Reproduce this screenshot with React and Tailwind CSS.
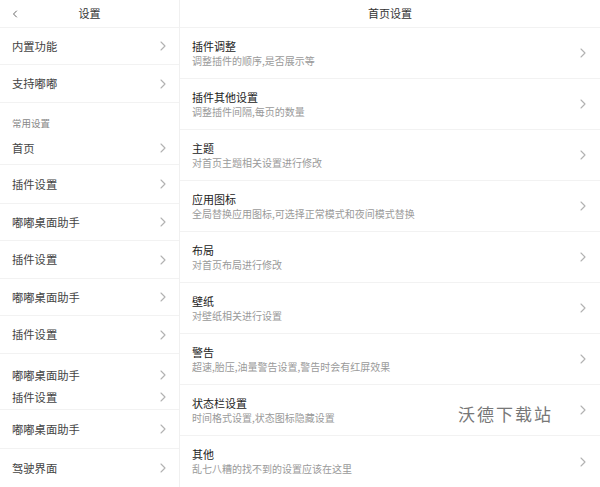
import { ChevronLeft } from 'lucide-react';

const font = { fontFamily: '"Noto Sans CJK SC", "Noto Sans", sans-serif' };

const homeItems = [
  { title: '插件调整', desc: '调整插件的顺序,是否展示等' },
  { title: '插件其他设置', desc: '调整插件间隔,每页的数量' },
  { title: '主题', desc: '对首页主题相关设置进行修改' },
  { title: '应用图标', desc: '全局替换应用图标,可选择正常模式和夜间模式替换' },
  { title: '布局', desc: '对首页布局进行修改' },
  { title: '壁纸', desc: '对壁纸相关进行设置' },
  { title: '警告', desc: '超速,胎压,油量警告设置,警告时会有红屏效果' },
  { title: '状态栏设置', desc: '时间格式设置,状态图标隐藏设置' },
  { title: '其他', desc: '乱七八糟的找不到的设置应该在这里' },
];

const Arrow = () => (
  <svg width="6" height="10" viewBox="0 0 6 10" fill="none" className="shrink-0">
    <polyline points="1,1 5,5 1,9" stroke="#b2b2b2" strokeWidth="1.1" strokeLinecap="round" strokeLinejoin="round" />
  </svg>
);

function LeftRow({ label, h = 'h-[38px]', border = true }) {
  return (
    <div className={`flex ${h} items-center justify-between pl-3 pr-[13px] ${border ? 'border-b border-[#f2f2f2]' : ''}`}>
      <span className="text-[11.3px] text-[#444]">{label}</span>
      <Arrow />
    </div>
  );
}

export default function App() {
  return (
    <div className="relative flex h-[487px] w-[600px] overflow-hidden bg-white" style={font}>
      <div className="flex w-[180px] shrink-0 flex-col border-r border-[#f0f0f0]">
        <div className="relative flex h-[28px] items-center justify-center border-b border-[#f2f2f2]">
          <ChevronLeft className="absolute left-[9px] h-[12px] w-[12px] text-[#555]" strokeWidth={1.8} />
          <span className="text-[11px] text-[#333]">设置</span>
        </div>
        <LeftRow label="内置功能" h="h-[37px]" />
        <LeftRow label="支持嘟嘟" />
        <div className="flex h-[29px] items-end pb-[2px] pl-3 text-[9.5px] text-[#888]">常用设置</div>
        <LeftRow label="首页" h="h-[33px]" />
        <LeftRow label="插件设置" h="h-[39px]" />
        <LeftRow label="嘟嘟桌面助手" h="h-[37px]" />
        <LeftRow label="插件设置" />
        <LeftRow label="嘟嘟桌面助手" h="h-[37px]" />
        <LeftRow label="插件设置" />
        <div className="flex h-[56px] flex-col border-b border-[#f2f2f2] pt-[12px]">
          <div className="flex h-[18px] items-center justify-between pl-3 pr-[13px]">
            <span className="text-[11.3px] text-[#444]">嘟嘟桌面助手</span>
            <Arrow />
          </div>
          <div className="mt-[4px] flex h-[18px] items-center justify-between pl-3 pr-[13px]">
            <span className="text-[11.3px] text-[#444]">插件设置</span>
            <Arrow />
          </div>
        </div>
        <LeftRow label="嘟嘟桌面助手" h="h-[39px]" />
        <LeftRow label="驾驶界面" h="h-[38px]" border={false} />
      </div>

      <div className="flex flex-1 flex-col">
        <div className="flex h-[28px] items-center justify-center border-b border-[#f2f2f2]">
          <span className="text-[11px] text-[#333]">首页设置</span>
        </div>
        {homeItems.map((item, i) => (
          <div
            key={item.title}
            className={`flex h-[51px] items-center justify-between pl-3 pr-[14px] ${i < homeItems.length - 1 ? 'border-b border-[#f2f2f2]' : ''}`}
          >
            <div className="flex flex-col">
              <span className="text-[11px] leading-[15px] text-[#222]">{item.title}</span>
              <span className="text-[10px] leading-[14px] text-[#9a9a9a]">{item.desc}</span>
            </div>
            <Arrow />
          </div>
        ))}
      </div>

      <div className="pointer-events-none absolute left-[458px] top-[401px] text-[17px] tracking-[2px] text-[#777]">
        沃德下载站
      </div>
    </div>
  );
}
